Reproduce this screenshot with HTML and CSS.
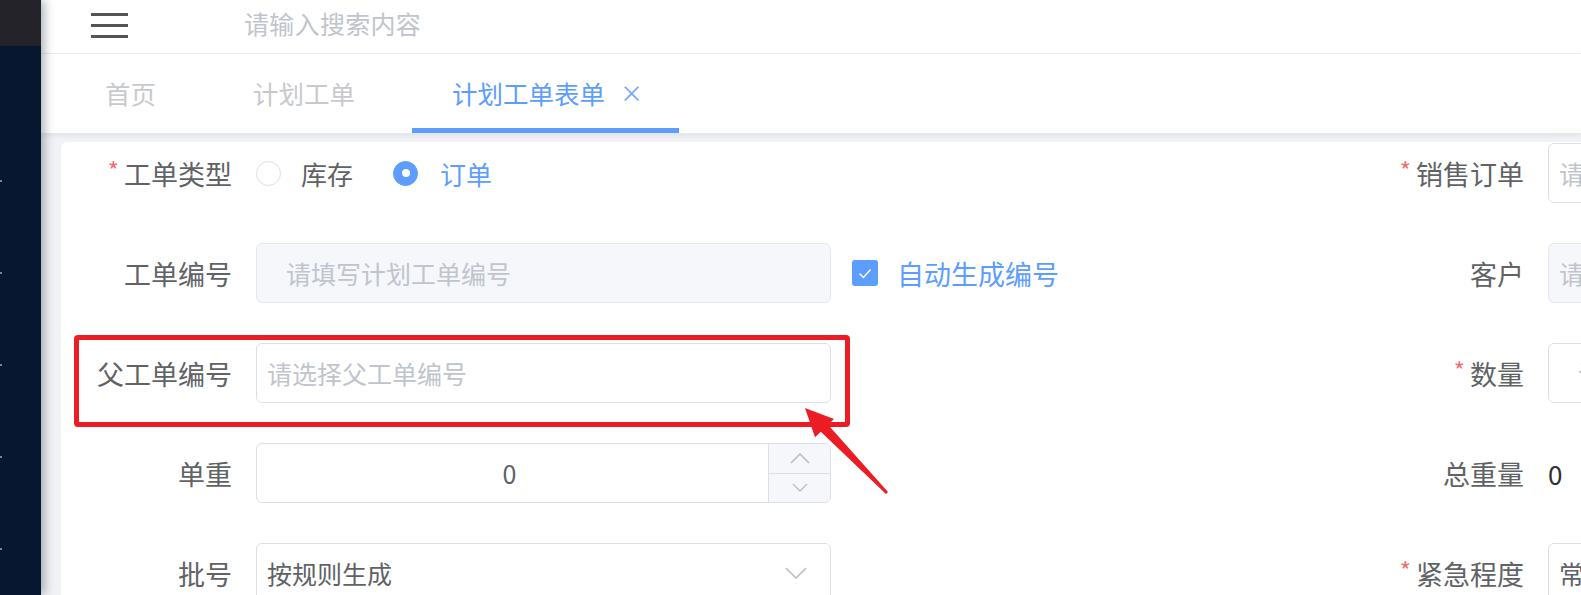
FILE: index.html
```html
<!DOCTYPE html>
<html lang="zh-CN">
<head>
<meta charset="utf-8">
<title>计划工单表单</title>
<link rel="stylesheet" href="styles.css">
</head>
<body>
<div class="app">
  <aside class="sidebar">
    <div class="logo"></div>
    <ul class="menu">
      <li><i></i></li><li><i></i></li><li><i></i></li><li><i></i></li><li><i></i></li>
    </ul>
  </aside>
  <div class="main">
    <header class="navbar">
      <svg class="hamburger" width="37" height="26" viewBox="0 0 37 26"><rect x="0" y="0" width="37" height="3"/><rect x="0" y="11" width="37" height="3"/><rect x="0" y="22" width="37" height="3"/></svg>
      <span class="search">请输入搜索内容</span>
    </header>
    <nav class="tabs">
      <div class="tab">首页</div>
      <div class="tab">计划工单</div>
      <div class="tab active">计划工单表单<span class="close">×</span></div>
    </nav>
    <section class="content">
      <div class="card">
        <div class="form">
          <!-- row 1 -->
          <label class="label"><span class="req">*</span>工单类型</label>
          <div class="control radios">
            <span class="radio"><span class="dot"></span>库存</span>
            <span class="radio checked"><span class="dot"></span>订单</span>
          </div>
          <div class="extra"></div>
          <label class="label"><span class="req">*</span>销售订单</label>
          <div class="input"><span class="ph">请选择销售订单</span></div>

          <!-- row 2 -->
          <label class="label">工单编号</label>
          <div class="input disabled wide-pad"><span class="ph">请填写计划工单编号</span></div>
          <div class="extra"><span class="checkbox"><span class="box"><svg width="14" height="11" viewBox="0 0 14 11"><polyline points="1.5,5.5 5.5,9.5 12.5,1.5" fill="none" stroke="#fff" stroke-width="1.4"/></svg></span>自动生成编号</span></div>
          <label class="label">客户</label>
          <div class="input disabled"><span class="ph">请选择客户</span></div>

          <!-- row 3 -->
          <label class="label">父工单编号</label>
          <div class="input"><span class="ph">请选择父工单编号</span></div>
          <div class="extra"></div>
          <label class="label"><span class="req">*</span>数量</label>
          <div class="input wide-pad"><span class="ph">请输入数量</span></div>

          <!-- row 4 -->
          <label class="label">单重</label>
          <div class="number">
            <span class="num-value">0</span>
            <span class="num-ctrl">
              <span class="up"><svg width="20" height="12" viewBox="0 0 20 12"><polyline points="1,11 10,2 19,11" fill="none" stroke="#b8bbc2" stroke-width="1.5"/></svg></span>
              <span class="down"><svg width="16" height="9" viewBox="0 0 16 9"><polyline points="1,1 8,8 15,1" fill="none" stroke="#b8bbc2" stroke-width="1.3"/></svg></span>
            </span>
          </div>
          <div class="extra"></div>
          <label class="label">总重量</label>
          <div class="plain">0</div>

          <!-- row 5 -->
          <label class="label">批号</label>
          <div class="input select"><span class="val">按规则生成</span><svg class="chev" width="22" height="12" viewBox="0 0 22 12"><polyline points="1,1 11,11 21,1" fill="none" stroke="#b8bbc2" stroke-width="1.5"/></svg></div>
          <div class="extra"></div>
          <label class="label"><span class="req">*</span>紧急程度</label>
          <div class="input select"><span class="val">常规</span></div>
        </div>
      </div>
    </section>
  </div>
  <div class="highlight"></div>
  <svg class="arrow" width="1581" height="595" viewBox="0 0 1581 595"><polygon points="805,408 834,419 828,424.7 888,492 886,494 820.8,431.7 815,437.2" fill="#ec1c24"/></svg>
</div>
</body>
</html>
```

FILE: styles.css
```css
* { box-sizing: border-box; margin: 0; padding: 0; }
html, body { width: 1581px; height: 595px; overflow: hidden; }
body {
  font-family: "Noto Sans CJK SC", "Noto Sans", "Liberation Sans", sans-serif;
  background: #fff;
  color: #606266;
}
.app { position: relative; display: flex; width: 1581px; height: 595px; }

/* sidebar */
.sidebar {
  width: 41px; flex: none;
  background: #081730;
  position: relative; z-index: 2;
  box-shadow: 3px 0 10px rgba(0, 21, 41, 0.35);
  display: flex; flex-direction: column;
}
.logo { height: 53px; background: #232329; }
.menu { list-style: none; padding-top: 89px; }
.menu li { height: 92px; display: flex; align-items: center; }
.menu i { display: block; width: 2px; height: 2px; background: #7c8696; }

/* main */
.main { flex: 1; display: flex; flex-direction: column; min-width: 0; overflow: hidden; }
.navbar {
  height: 54px; flex: none;
  border-bottom: 1px solid #f0f0f2;
  display: flex; align-items: center;
  padding-left: 50px;
}
.hamburger { fill: #555; margin-top: -2px; }
.search { margin-left: 116px; font-size: 25px; color: #c0c4cc; margin-top: -8px; letter-spacing: 0.3px; }

.tabs {
  height: 79px; flex: none;
  display: flex; align-items: stretch;
  padding-left: 24px;
  box-shadow: 0 2px 6px rgba(0, 21, 41, 0.08);
  position: relative; z-index: 1;
  background: #fff;
}
.tab {
  padding: 0 40px; margin-right: 17px;
  font-size: 25.5px; color: #c8c9cc;
  display: flex; align-items: center;
  border-bottom: 5px solid transparent;
  padding-top: 2px;
}
.tab.active { color: #5c9dff; border-bottom-color: #5c9dff; padding-right: 36px; }
.close { font-size: 23px; margin-left: 15px; color: #6fa6fb; }

.content {
  flex: 1; background: #f0f2f5;
  padding: 9px 0 0 20px;
  overflow: hidden;
}
.card {
  width: 1887px; height: 600px;
  background: #fff; border-radius: 6px 0 0 0;
  padding-top: 1px;
}
.form {
  display: grid;
  grid-template-columns: 195px 575px 493px 224px 400px;
  grid-auto-rows: 60px;
  row-gap: 40px;
}
.label {
  display: flex; align-items: center; justify-content: flex-end;
  padding-right: 24px;
  font-size: 27px; color: #606266;
}
.req { color: #f56c6c; font-size: 24px; margin-right: 5px; align-self: center; margin-top: -8px; }

.input {
  border: 1px solid #dcdfe6; border-radius: 6px;
  display: flex; align-items: center;
  padding-left: 10px;
  font-size: 25px;
  background: #fff;
}
.input.disabled { background: #f5f7fa; border-color: #e4e7ed; }
.input.wide-pad { padding-left: 29px; }
.ph { color: #c0c4cc; white-space: nowrap; }
.val { color: #606266; white-space: nowrap; flex: 1; }
.select .chev { margin-right: 23px; }

.radios { display: flex; align-items: center; font-size: 26px; }
.radio { display: flex; align-items: center; margin-right: 40px; color: #606266; }
.radio .dot {
  width: 25px; height: 25px; border-radius: 50%;
  border: 1px solid #dcdfe6; background: #fff;
  margin-right: 20px;
  display: flex; align-items: center; justify-content: center;
}
.radio.checked { color: #5c9dff; }
.radio.checked .dot { background: #5c9dff; border-color: #5c9dff; margin-right: 22px; }
.radio.checked .dot::after { content: ""; width: 8px; height: 8px; border-radius: 50%; background: #fff; }

.extra { display: flex; align-items: center; }
.checkbox { display: flex; align-items: center; margin-left: 21px; font-size: 27px; color: #5c9dff; }
.checkbox .box {
  width: 26px; height: 26px; border-radius: 3px; background: #5c9dff;
  display: flex; align-items: center; justify-content: center;
  margin-right: 19px;
}

.number {
  border: 1px solid #dcdfe6; border-radius: 6px;
  display: flex; overflow: hidden;
}
.num-value { flex: 1; display: flex; align-items: center; justify-content: center; font-size: 25px; color: #606266; padding-right: 6px; }
.num-ctrl { width: 62px; display: flex; flex-direction: column; border-left: 1px solid #dcdfe6; background: #f5f7fa; }
.num-ctrl .up { flex: 1; display: flex; align-items: center; justify-content: center; border-bottom: 1px solid #dcdfe6; }
.num-ctrl .down { flex: 1; display: flex; align-items: center; justify-content: center; }

.plain { display: flex; align-items: center; font-size: 26px; color: #303133; }

/* annotation overlays */
.highlight {
  position: absolute; left: 74px; top: 335px; width: 776px; height: 92px;
  border: 5px solid #ec1c24; border-radius: 4px;
  pointer-events: none; z-index: 5;
}
.arrow { position: absolute; left: 0; top: 0; pointer-events: none; z-index: 5; }
```
